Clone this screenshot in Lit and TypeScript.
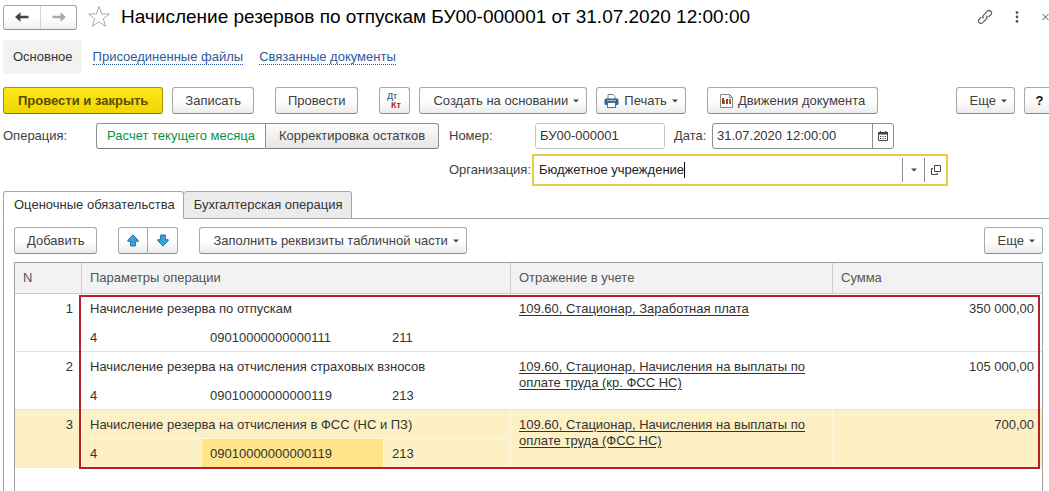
import { LitElement, html, css, svg } from "lit";
import { customElement, state } from "lit/decorators.js";
import { classMap } from "lit/directives/class-map.js";

interface Entry {
  n: number;
  title: string;
  kfo: string;
  kps: string;
  kosgu: string;
  account: string;
  sum: string;
}

const ENTRIES: Entry[] = [
  { n: 1, title: "Начисление резерва по отпускам", kfo: "4", kps: "09010000000000111", kosgu: "211", account: "109.60, Стационар, Заработная плата", sum: "350 000,00" },
  { n: 2, title: "Начисление резерва на отчисления страховых взносов", kfo: "4", kps: "09010000000000119", kosgu: "213", account: "109.60, Стационар, Начисления на выплаты по оплате труда (кр. ФСС НС)", sum: "105 000,00" },
  { n: 3, title: "Начисление резерва на отчисления в ФСС (НС и ПЗ)", kfo: "4", kps: "09010000000000119", kosgu: "213", account: "109.60, Стационар, Начисления на выплаты по оплате труда (ФСС НС)", sum: "700,00" },
];

const caret = html`<svg class="caret" width="6" height="4" viewBox="0 0 6 4" aria-hidden="true"><path d="M0 0.5h6L3 3.5z" fill="#444" /></svg>`;

const navArrow = (color: string, back: boolean) => html`<svg width="16" height="12" viewBox="0 0 16 12" aria-hidden="true">
  <g transform=${back ? "" : "matrix(-1 0 0 1 16 0)"}>${svg`<path d="M1 6L6.5 1.3V4.8H14.5V7.2H6.5V10.7z" fill=${color} />`}</g>
</svg>`;

const moveArrow = (up: boolean) => html`<svg width="12" height="13" viewBox="0 0 12 13" aria-hidden="true">
  <g transform=${up ? "" : "matrix(1 0 0 -1 0 13)"}>${svg`<path d="M6 0.8L11.2 6.3V7.3H8.4V12H3.6V7.3H0.8V6.3z" fill="#35a3dc" stroke="#2375a6" />`}</g>
</svg>`;

@customElement("app-root")
export class AppRoot extends LitElement {
  @state() private selected = 3;
  @state() private tab = 0;

  static styles = css`
    :host {
      display: flex;
      flex-direction: column;
      box-sizing: border-box;
      min-height: 100vh;
      padding-left: 3px;
      background: #fff;
      color: #404040;
      font: 13px/16px "Liberation Sans", Arial, sans-serif;
      overflow: hidden;
    }
    * { box-sizing: border-box; }
    button, input { font: inherit; color: inherit; margin: 0; }
    svg { display: block; flex: none; }

    .header { display: flex; align-items: center; height: 34px; }
    .history { display: flex; height: 25px; border: 1px solid #a9a9a9; border-bottom-color: #8c8c8c; border-radius: 3px; background: linear-gradient(#fff 50%, #efefef); }
    .history button { width: 36px; padding: 0; border: 0; background: none; display: grid; place-items: center; }
    .history button + button { border-left: 1px solid #d4d4d4; }
    .icon { border: 0; padding: 0; background: none; display: grid; place-items: center; }
    .star { margin: 0 10px; }
    h1 { margin: 0; font-size: 19px; line-height: 24px; font-weight: 400; color: #000; white-space: nowrap; }
    .window { margin-left: auto; display: flex; align-items: center; gap: 22px; }
    .window .icon { height: 16px; }

    .sections { display: flex; align-items: center; gap: 16px; height: 34px; margin-top: 6px; }
    .sections a { color: #2f5a9b; text-decoration: none; border-bottom: 1px dotted #2f5a9b; line-height: 14px; }
    .sections a.current { margin-right: -5px; padding: 10px 9px 10px 10px; border: 0; border-radius: 3px; background: #f2f2f2; color: #333; }

    .bar { display: flex; gap: 9px; }
    .main { margin-top: 13px; }
    .wide { margin-left: 12px; }
    .btn { display: flex; align-items: center; justify-content: center; gap: 5px; height: 27px; padding: 0 12px; border: 1px solid #a9a9a9; border-bottom-color: #8c8c8c; border-radius: 3px; background: linear-gradient(#fff 50%, #ececec); white-space: nowrap; }
    .primary { padding: 0 14px; border-color: #a89405; border-bottom-color: #857300; background: linear-gradient(#ffe81a, #f0d500); color: #5a4e00; font-weight: 700; }
    .tail { padding: 0 7px 0 13px; }
    .narrow { padding: 0 7px; }
    .push { margin-left: auto; }
    .help { width: 25px; padding: 0 0 0 5px; border-right: 0; border-radius: 3px 0 0 3px; color: #111; font-weight: 700; }
    .pair { display: flex; }
    .pair .btn { width: 30px; padding: 0; }
    .pair .btn:first-child { border-radius: 3px 0 0 3px; }
    .pair .btn:last-child { border-radius: 0 3px 3px 0; border-left: 0; }

    .form { display: flex; margin-top: 9px; gap: 10px; }
    .labelled { line-height: 25px; width: 83px; }
    fieldset { display: flex; margin: 0; padding: 0; border: 0; }
    .seg { position: relative; height: 26px; line-height: 24px; border: 1px solid #8f8f8f; border-bottom-color: #7c7c7c; padding: 0 10px; text-align: center; background: linear-gradient(#fcfcfc, #e6e6e6); white-space: nowrap; }
    .seg:first-of-type { border-radius: 3px 0 0 3px; width: 170px; }
    .seg:last-of-type { border-radius: 0 3px 3px 0; border-left: 0; width: 173px; }
    .seg input { position: absolute; inset: 0; opacity: 0; width: 100%; height: 100%; }
    .seg:has(:checked) { background: #fff; color: #0c9048; }
    .fields { display: flex; flex-direction: column; gap: 5px; width: 499px; }
    .line { display: flex; align-items: center; }
    .line label { width: 83px; }
    .line .date-label { width: 38px; margin-left: 9px; }
    .box { display: flex; height: 26px; border: 1px solid #8f8f8f; border-radius: 3px; background: #fff; color: #333; }
    .box input { border: 0; padding: 0 0 0 4px; background: none; outline: 0; min-width: 0; }
    .box button { border: 0; border-left: 1px solid #8f8f8f; padding: 0; background: none; display: grid; place-items: center; }
    .number { width: 130px; margin-left: 3px; border-color: #c4c4c4; }
    .number input, .date input { width: 100%; }
    .date { width: 182px; }
    .date button { width: 21px; flex: none; }
    .org { flex: 1; height: 32px; padding: 2px 0; border: 2px solid #e8cb47; border-radius: 0; }
    .org input { field-sizing: content; padding: 0; margin-left: 5px; color: #222; }
    .cursor { width: 1px; height: 16px; margin: 4px auto 0 0; background: #000; }
    .org button { width: 22px; flex: none; }

    .tabs { display: flex; margin-top: 5px; height: 28px; }
    .tabs button { border: 1px solid #a6a6a6; border-radius: 3px 3px 0 0; background: #ebebeb; padding: 0 8px 0 10px; color: #333; }
    .tabs button + button { border-left: 0; }
    .tabs button.active { background: #fff; border-bottom-color: #fff; }
    .tabs .rest { flex: 1; border-bottom: 1px solid #a6a6a6; }
    .panel { flex: 1; display: flex; flex-direction: column; border-left: 1px solid #a6a6a6; padding: 8px 6px 0 10px; }

    .grid { flex: 1; position: relative; margin-top: 8px; border: 1px solid #a0a0a0; border-bottom: 0; }
    table { width: 100%; table-layout: fixed; border-collapse: separate; border-spacing: 0; color: #333; }
    .c-n { width: 66px; } .c-a { width: 120px; } .c-b { width: 182px; } .c-c { width: 127px; } .c-acc { width: 322px; } .c-sum { width: 210px; }
    th { height: 31px; padding: 0 8px; text-align: left; font-weight: 400; color: #555; background: #f2f2f2; border-bottom: 1px solid #cdcdcd; }
    th + th { border-left: 1px solid #cdcdcd; }
    td { height: 29px; padding: 7px 8px 5px 9px; vertical-align: top; }
    td.end { border-bottom: 1px solid #e2e2e2; }
    .num { text-align: right; }
    td.link { padding-right: 24px; }
    td a { color: inherit; text-decoration: underline; text-underline-offset: 2px; }
    .sel td { background: #fdf0c4; border-bottom: 1px solid #fff8e0; border-left: 1px solid #fff8e0; padding-left: 8px; }
    .sel td.end { border-bottom-color: #f3ead0; }
    .sel td.first { border-left: 0; }
    .sel td.cell { background: #ffe48a; }
    .frame { position: absolute; left: 64px; right: 2px; top: 32px; height: 174px; border: 2px solid #b81f28; pointer-events: none; }
  `;

  private row(e: Entry) {
    const sel = classMap({ sel: this.selected === e.n });
    const pick = () => (this.selected = e.n);
    return html`
      <tr class=${sel} @click=${pick}>
        <td class="num end first" rowspan="2">${e.n}</td>
        <td colspan="3">${e.title}</td>
        <td class="link end" rowspan="2"><a href="#account">${e.account}</a></td>
        <td class="num end" rowspan="2">${e.sum}</td>
      </tr>
      <tr class=${sel} @click=${pick}>
        <td class="end">${e.kfo}</td>
        <td class="end cell">${e.kps}</td>
        <td class="end">${e.kosgu}</td>
      </tr>`;
  }

  render() {
    return html`
      <header class="header">
        <div class="history">
          <button aria-label="Назад">${navArrow("#444", true)}</button>
          <button aria-label="Вперед">${navArrow("#aaa", false)}</button>
        </div>
        <button class="icon star" aria-label="В избранное">
          <svg width="24" height="24" viewBox="0 0 24 24"><path d="M12 1.5L14.7 9H22.5L16.3 13.7L18.6 21.3L12 16.8L5.4 21.3L7.7 13.7L1.5 9H9.3z" fill="#fff" stroke="#aaa" /></svg>
        </button>
        <h1>Начисление резервов по отпускам БУ00-000001 от 31.07.2020 12:00:00</h1>
        <div class="window">
          <button class="icon" aria-label="Получить ссылку">
            <svg width="16" height="16" viewBox="0 0 16 16" fill="none" stroke="#666" stroke-width="1.3"><path d="M6.6 9.4L5.8 8.2 6.4 6.4 10.2 2.4C12.6 0 16 3.4 13.8 5.8L11.6 8M9.4 6.6L10.2 7.8 9.6 9.6 5.8 13.6C3.4 16 0 12.6 2.2 10.2L4.4 8" /></svg>
          </button>
          <button class="icon" aria-label="Меню">
            <svg width="4" height="12" viewBox="0 0 4 12" fill="#555"><circle cx="2" cy="1.6" r="1.4" /><circle cx="2" cy="6" r="1.4" /><circle cx="2" cy="10.4" r="1.4" /></svg>
          </button>
          <button class="icon" aria-label="Закрыть">
            <svg width="8" height="8" viewBox="0 0 8 8" stroke="#555"><path d="M1.5 1L7.5 7M7.5 1L1.5 7" /></svg>
          </button>
        </div>
      </header>

      <nav class="sections">
        <a class="current" href="#main">Основное</a>
        <a href="#files">Присоединенные файлы</a>
        <a href="#docs">Связанные документы</a>
      </nav>

      <div class="bar main">
        <button class="btn primary">Провести и закрыть</button>
        <button class="btn">Записать</button>
        <button class="btn wide">Провести</button>
        <button class="btn narrow wide" aria-label="Показать проводки">
          <svg width="15" height="17" viewBox="0 0 15 17" font-family="Liberation Sans" font-size="9"><text x="0" y="7" fill="#2c6a9e" stroke="#2c6a9e" stroke-width="0.2">Дт</text><text x="4" y="16" fill="#c21f26" font-weight="700">Кт</text></svg>
        </button>
        <button class="btn tail">Создать на основании ${caret}</button>
        <button class="btn narrow">
          <svg width="15" height="14" viewBox="0 0 15 14"><path d="M4 5V0.5H9L11 2.5V5" fill="#fff" stroke="#6d8296" /><rect x="0.5" y="4.5" width="14" height="6.5" rx="1.5" fill="#336791" /><rect x="3" y="6" width="9" height="1" fill="#9fc0da" /><rect x="3.5" y="8.5" width="8" height="5" fill="#fff" stroke="#54718a" /></svg>
          Печать ${caret}
        </button>
        <button class="btn wide">
          <svg width="13" height="14" viewBox="0 0 13 14"><path d="M0.5 0.5H9.5L12.5 3.5V13.5H0.5z" fill="#fff" stroke="#7d9086" /><path d="M9.5 0.5V3.5H12.5" fill="none" stroke="#7d9086" /><rect x="2" y="4" width="2" height="6" fill="#b8322a" /><rect x="4" y="6" width="1" height="4" fill="#5f8f4a" /><rect x="6" y="5" width="2" height="5" fill="#b8322a" /><rect x="9" y="5" width="2" height="5" fill="#a5642c" /></svg>
          Движения документа
        </button>
        <button class="btn tail push">Еще ${caret}</button>
        <button class="btn help">?</button>
      </div>

      <div class="form">
        <div class="labelled" id="op">Операция:</div>
        <fieldset aria-labelledby="op">
          <label class="seg"><input type="radio" name="op" checked />Расчет текущего месяца</label>
          <label class="seg"><input type="radio" name="op" />Корректировка остатков</label>
        </fieldset>
        <div class="fields">
          <div class="line">
            <label for="num">Номер:</label>
            <div class="box number"><input id="num" value="БУ00-000001" /></div>
            <label class="date-label" for="date">Дата:</label>
            <div class="box date">
              <input id="date" value="31.07.2020 12:00:00" />
              <button aria-label="Календарь">
                <svg width="10" height="10" viewBox="0 0 10 10"><path d="M0.5 1.5H9.5V9.5H0.5z" fill="#fff" stroke="#444" /><path d="M0 1H10V3.5H0zM2 0H3V2H2zM7 0H8V2H7z" fill="#444" /><path d="M2 5.5H8M2 7.5H8" stroke="#444" stroke-dasharray="1.2 1.2" /></svg>
              </button>
            </div>
          </div>
          <div class="line">
            <label for="org">Организация:</label>
            <div class="box org">
              <input id="org" value="Бюджетное учреждение" />
              <span class="cursor"></span>
              <button aria-label="Выбрать">${caret}</button>
              <button aria-label="Открыть">
                <svg width="10" height="10" viewBox="0 0 10 10" fill="none" stroke="#444"><path d="M3.5 0.5H9.5V6.5H3.5z" /><path d="M2 3.5H0.5V9.5H6.5V8" /></svg>
              </button>
            </div>
          </div>
        </div>
      </div>

      <div class="tabs" role="tablist">
        ${["Оценочные обязательства", "Бухгалтерская операция"].map(
          (t, i) => html`<button role="tab" class=${classMap({ active: this.tab === i })} aria-selected=${this.tab === i} @click=${() => (this.tab = i)}>${t}</button>`
        )}
        <div class="rest" role="presentation"></div>
      </div>

      <section class="panel">
        <div class="bar">
          <button class="btn">Добавить</button>
          <div class="pair wide">
            <button class="btn" aria-label="Вверх">${moveArrow(true)}</button>
            <button class="btn" aria-label="Вниз">${moveArrow(false)}</button>
          </div>
          <button class="btn tail wide">Заполнить реквизиты табличной части ${caret}</button>
          <button class="btn tail push">Еще ${caret}</button>
        </div>
        <div class="grid">
          <table>
            <colgroup><col class="c-n" /><col class="c-a" /><col class="c-b" /><col class="c-c" /><col class="c-acc" /><col class="c-sum" /></colgroup>
            <thead>
              <tr><th>N</th><th colspan="3">Параметры операции</th><th>Отражение в учете</th><th>Сумма</th></tr>
            </thead>
            <tbody>${ENTRIES.map((e) => this.row(e))}</tbody>
          </table>
          <div class="frame"></div>
        </div>
      </section>
    `;
  }
}
